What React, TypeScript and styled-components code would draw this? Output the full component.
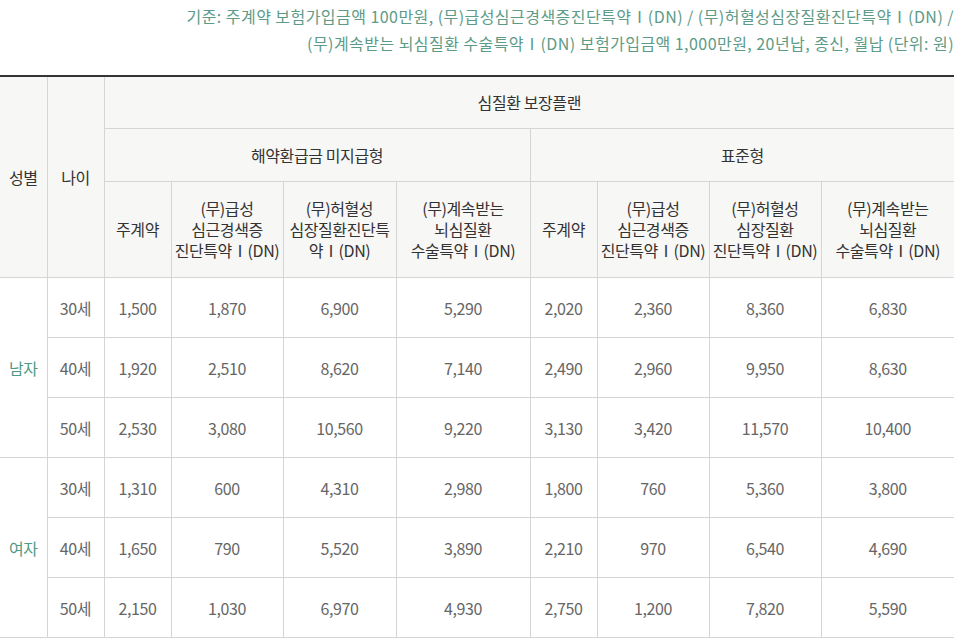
import React from 'react';
import styled, { createGlobalStyle } from 'styled-components';

const GlobalStyle = createGlobalStyle`
  body {
    margin: 0;
    background: #fff;
    font-family: 'Noto Sans CJK KR', 'Noto Sans', sans-serif;
  }
`;

const Wrap = styled.div`
  width: 954px;
`;

const Caption = styled.p`
  margin: 0;
  padding-top: 3px;
  color: #5d9b87;
  font-size: 16px;
  line-height: 27px;
  letter-spacing: 0.45px;
  text-align: right;
`;

const Table = styled.table`
  width: 954px;
  margin-top: 18px;
  border-collapse: collapse;
  table-layout: fixed;
  border-top: 2px solid #333;
  border-bottom: 1px solid #d5d5d5;
  font-size: 16px;
  letter-spacing: -0.4px;
`;

const Th = styled.th<{ $h?: number }>`
  height: ${({ $h }) => ($h ? `${$h}px` : 'auto')};
  padding: 0 2px;
  background: #f7f7f5;
  border: 1px solid #d5d5d5;
  color: #333;
  font-weight: 400;
  line-height: 21px;
  white-space: nowrap;
  &:first-child {
    border-left: 0;
  }
  &:last-child {
    border-right: 0;
  }
`;

const Td = styled.td<{ $accent?: boolean }>`
  height: 59px;
  padding: 0;
  border: 1px solid #d5d5d5;
  color: ${({ $accent }) => ($accent ? '#4f9a85' : '#666')};
  text-align: center;
  &:first-child {
    border-left: 0;
  }
  &:last-child {
    border-right: 0;
  }
`;

const widths = [47, 57, 67, 112, 113, 134, 67, 112, 112, 133];

type Group = { sex: string; rows: { age: string; values: string[] }[] };

const data: Group[] = [
  {
    sex: '남자',
    rows: [
      { age: '30세', values: ['1,500', '1,870', '6,900', '5,290', '2,020', '2,360', '8,360', '6,830'] },
      { age: '40세', values: ['1,920', '2,510', '8,620', '7,140', '2,490', '2,960', '9,950', '8,630'] },
      { age: '50세', values: ['2,530', '3,080', '10,560', '9,220', '3,130', '3,420', '11,570', '10,400'] },
    ],
  },
  {
    sex: '여자',
    rows: [
      { age: '30세', values: ['1,310', '600', '4,310', '2,980', '1,800', '760', '5,360', '3,800'] },
      { age: '40세', values: ['1,650', '790', '5,520', '3,890', '2,210', '970', '6,540', '4,690'] },
      { age: '50세', values: ['2,150', '1,030', '6,970', '4,930', '2,750', '1,200', '7,820', '5,590'] },
    ],
  },
];

export default function App() {
  return (
    <Wrap>
      <GlobalStyle />
      <Caption>
        기준: 주계약 보험가입금액 100만원, (무)급성심근경색증진단특약Ⅰ(DN) / (무)허혈성심장질환진단특약Ⅰ(DN) /
        <br />
        (무)계속받는 뇌심질환 수술특약Ⅰ(DN) 보험가입금액 1,000만원, 20년납, 종신, 월납 (단위: 원)
      </Caption>
      <Table>
        <colgroup>
          {widths.map((w, i) => (
            <col key={i} style={{ width: w }} />
          ))}
        </colgroup>
        <thead>
          <tr>
            <Th rowSpan={3}>성별</Th>
            <Th rowSpan={3}>나이</Th>
            <Th colSpan={8} $h={51}>
              심질환 보장플랜
            </Th>
          </tr>
          <tr>
            <Th colSpan={4} $h={52}>
              해약환급금 미지급형
            </Th>
            <Th colSpan={4}>표준형</Th>
          </tr>
          <tr>
            <Th $h={95}>주계약</Th>
            <Th>
              (무)급성
              <br />
              심근경색증
              <br />
              진단특약Ⅰ(DN)
            </Th>
            <Th>
              (무)허혈성
              <br />
              심장질환진단특
              <br />
              약Ⅰ(DN)
            </Th>
            <Th>
              (무)계속받는
              <br />
              뇌심질환
              <br />
              수술특약Ⅰ(DN)
            </Th>
            <Th>주계약</Th>
            <Th>
              (무)급성
              <br />
              심근경색증
              <br />
              진단특약Ⅰ(DN)
            </Th>
            <Th>
              (무)허혈성
              <br />
              심장질환
              <br />
              진단특약Ⅰ(DN)
            </Th>
            <Th>
              (무)계속받는
              <br />
              뇌심질환
              <br />
              수술특약Ⅰ(DN)
            </Th>
          </tr>
        </thead>
        <tbody>
          {data.map((g) =>
            g.rows.map((r, i) => (
              <tr key={g.sex + r.age}>
                {i === 0 && (
                  <Td rowSpan={3} $accent>
                    {g.sex}
                  </Td>
                )}
                <Td>{r.age}</Td>
                {r.values.map((v, j) => (
                  <Td key={j}>{v}</Td>
                ))}
              </tr>
            )),
          )}
        </tbody>
      </Table>
    </Wrap>
  );
}
